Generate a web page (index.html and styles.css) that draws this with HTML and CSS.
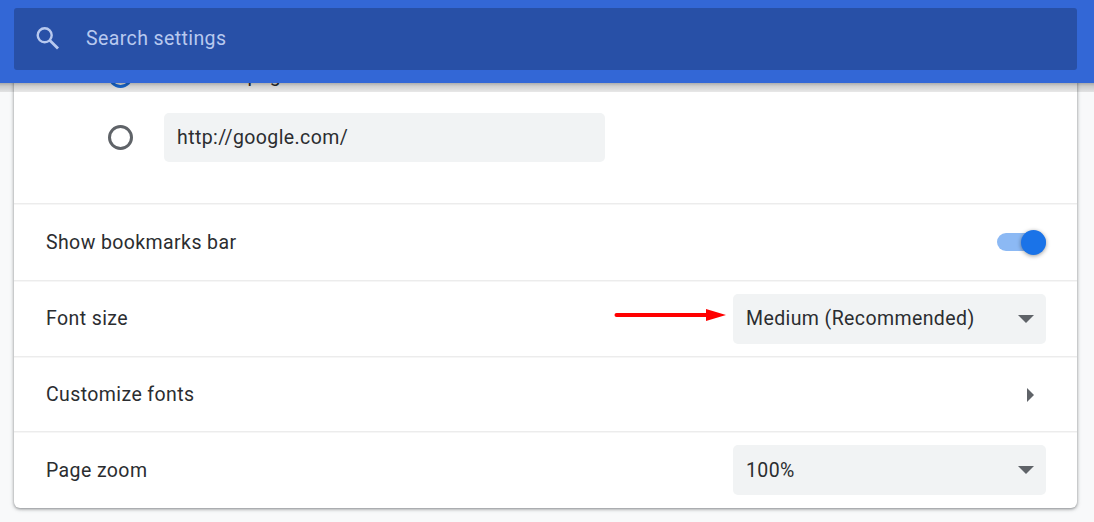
FILE: index.html
```html
<!DOCTYPE html>
<html lang="en">
<head>
<meta charset="utf-8">
<title>Settings</title>
<link rel="stylesheet" href="styles.css">
</head>
<body>
<header class="toolbar">
  <div class="search">
    <svg class="search-icon" width="24" height="24" viewBox="0 0 24 24"><circle cx="8.7" cy="8.3" r="7" fill="none" stroke="currentColor" stroke-width="2.4"/><path d="M13.7 13.3L22 21.6" fill="none" stroke="currentColor" stroke-width="2.8"/></svg>
    <span>Search settings</span>
  </div>
</header>
<main class="card">
  <div class="options">
    <div class="option"><span class="radio checked"></span><span>New Tab page</span></div>
    <div class="option"><span class="radio"></span><div class="url">http://google.com/</div></div>
  </div>
  <div class="row"><span class="label">Show bookmarks bar</span><span class="toggle"><span class="knob"></span></span></div>
  <div class="row">
    <span>Font size</span>
    <svg class="arrow" width="112" height="14" viewBox="0 0 112 14"><path d="M2.5 7H94" stroke="#f00" stroke-width="4" stroke-linecap="round"/><path d="M92 1L112 7L92 13Z" fill="#f00"/></svg>
    <div class="select"><span>Medium (Recommended)</span><svg width="16" height="8" viewBox="0 0 16 8"><path d="M0 0H16L8 8Z" fill="#5f6368"/></svg></div>
  </div>
  <div class="row short"><span>Customize fonts</span><svg class="chevron" width="7" height="14" viewBox="0 0 7 14"><path d="M0 0L7 7L0 14Z" fill="#5f6368"/></svg></div>
  <div class="row last"><span class="label">Page zoom</span><div class="select"><span class="label">100%</span><svg width="16" height="8" viewBox="0 0 16 8"><path d="M0 0H16L8 8Z" fill="#5f6368"/></svg></div></div>
</main>
</body>
</html>
```
FILE: styles.css
```css
* { box-sizing: border-box; }
body {
  margin: 0;
  height: 522px;
  overflow: hidden;
  background: #f8f9fa;
  color: #2b2d30;
  font: 19.5px/24px Roboto, sans-serif;
  letter-spacing: 0.4px;
}
.toolbar {
  position: relative;
  z-index: 2;
  height: 83px;
  padding: 8px 17px 0 14px;
  background: #3367d6;
}
.toolbar::after {
  content: "";
  position: absolute;
  left: 0;
  right: 0;
  top: 83px;
  height: 9px;
  background: linear-gradient(rgba(0,0,0,.32), rgba(0,0,0,.19) 35%, rgba(0,0,0,.09));
}
.search {
  display: flex;
  align-items: center;
  height: 62px;
  padding: 0 0 0 22px;
  border-radius: 3px;
  background: #2850a7;
  color: #b8c9ef;
  letter-spacing: 0.4px;
}
.search-icon { margin-right: 26px; }
.card {
  height: 458px;
  margin: -33px 17px 0 14px;
  background: #fff;
  border-radius: 6px;
  box-shadow: 0 1px 3px rgba(60,64,67,.5), 0 1px 5px rgba(60,64,67,.2);
}
.options {
  display: flex;
  flex-direction: column;
  gap: 13px;
  height: 153px;
  padding: 1px 0 0 94px;
}
.option { display: flex; align-items: center; height: 49px; }
.radio {
  width: 25px;
  height: 25px;
  margin-right: 31px;
  border: 3px solid #5f6368;
  border-radius: 50%;
}
.checked { border-color: #1a73e8; }
.url {
  width: 441px;
  height: 49px;
  padding: 13px;
  background: #f1f3f4;
  border-radius: 5px;
}
.row {
  display: flex;
  align-items: center;
  justify-content: space-between;
  height: 76px;
  padding: 0 31px 0 32px;
  border-top: 1px solid #ececec;
  box-shadow: inset 0 1px #f6f6f6;
}
.row:nth-child(2) { height: 77px; }
.row:nth-child(3) { padding-top: 1px; }
.label { padding-top: 1px; }
.short { height: 75px; padding-top: 1px; }
.last { height: 77px; }
.arrow { margin: -8px 7px 0 auto; }
.select {
  display: flex;
  align-items: center;
  justify-content: space-between;
  width: 313px;
  height: 50px;
  padding: 0 12px 0 13px;
  background: #f1f3f4;
  border-radius: 5px;
}
.toggle {
  display: flex;
  justify-content: flex-end;
  align-items: center;
  width: 49px;
  height: 18px;
  border-radius: 9px;
  background: #8cb9f4;
}
.knob {
  flex: none;
  width: 25px;
  height: 25px;
  border-radius: 50%;
  background: #1a73e8;
  box-shadow: 0 1px 4px rgba(0,0,0,.4);
}
.chevron { margin-right: 12px; }
```
